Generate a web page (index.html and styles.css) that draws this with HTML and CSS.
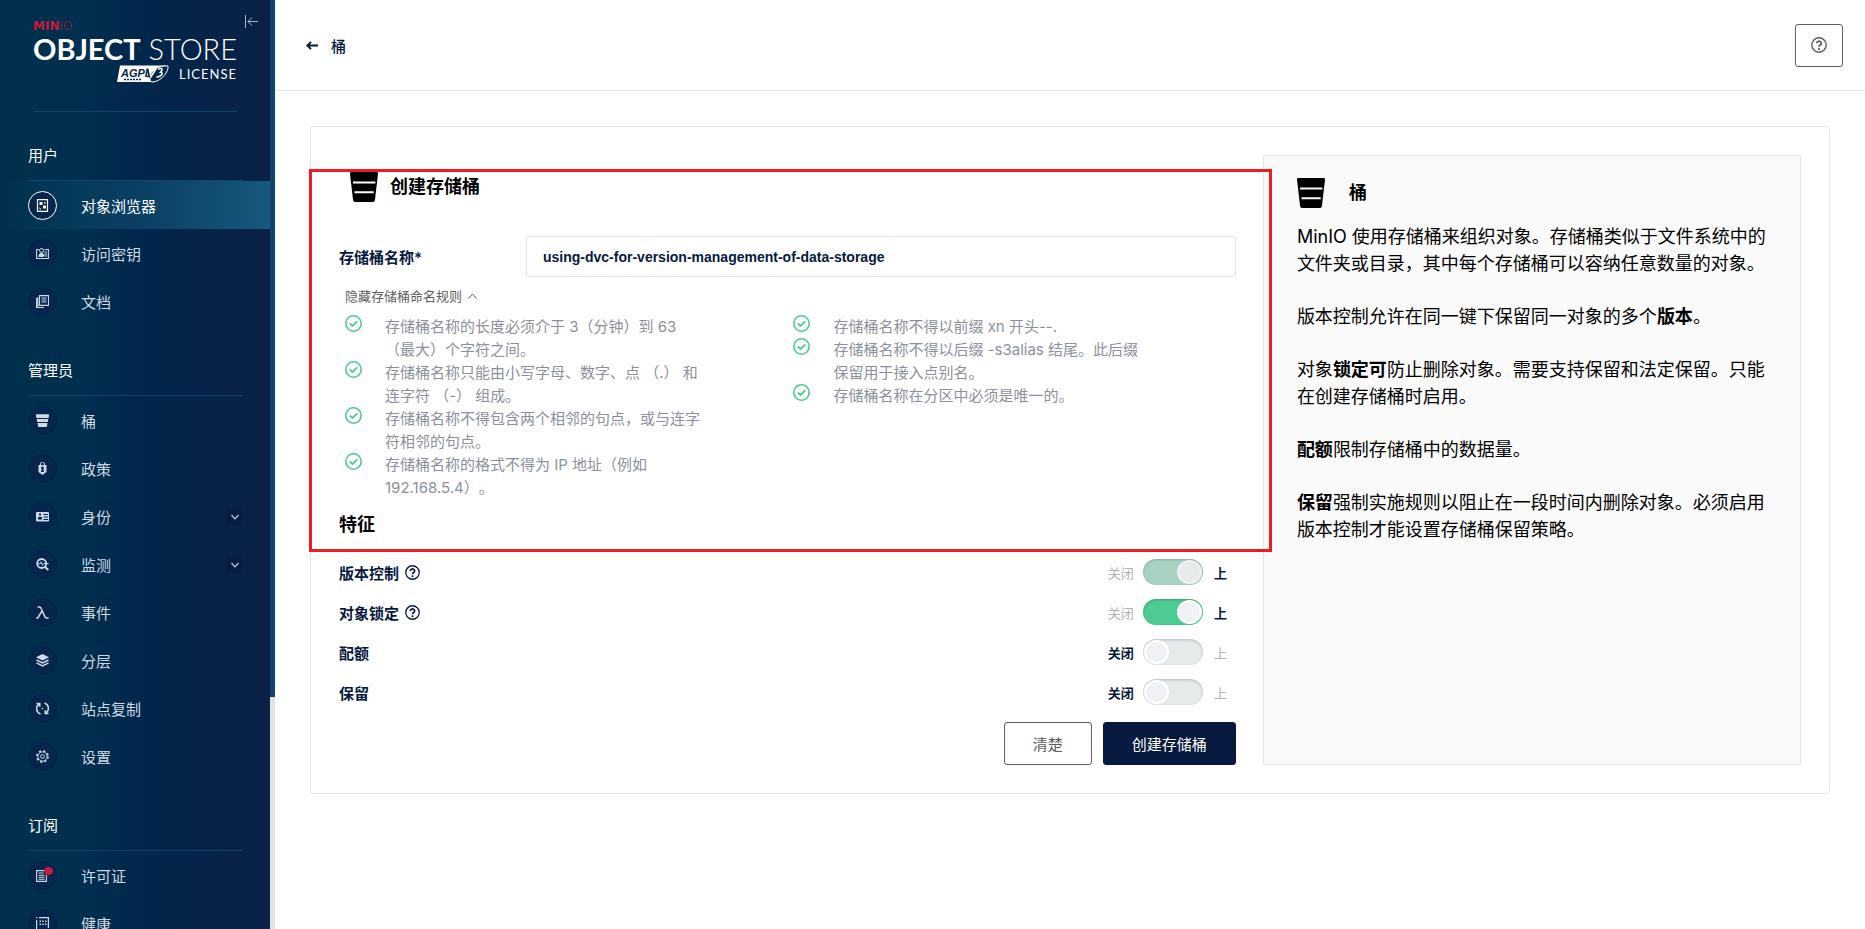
FILE: index.html
```html
<!DOCTYPE html>
<html lang="zh-CN">
<head>
<meta charset="utf-8">
<title>创建存储桶</title>
<link rel="stylesheet" href="styles.css">
</head>
<body>
<svg class="defs" aria-hidden="true">
  <symbol id="i-bucket" viewBox="0 0 28 30"><path fill-rule="evenodd" d="M1.5 0h25A1.500 1.500 0 0 1 28 1.700L24.900 28.200A2 2 0 0 1 23 30H5a2 2 0 0 1-1.900-1.800L0 1.700A1.500 1.500 0 0 1 1.500 0zM3 9.400v2h22.400v-2zM4.500 19.200v2h19.200v-2z"/></symbol>
  <symbol id="i-bucket-small" viewBox="0 0 13 13"><path d="M0 .300h13L12.700 4H.300zM.800 5h11.400L11.900 8H1.100zM1.500 9h10l-.5 3.200a1 1 0 0 1-1 .8H3a1 1 0 0 1-1-.8z"/></symbol>
  <symbol id="i-help" viewBox="0 0 16 16"><circle cx="8" cy="8" r="7.200" fill="none" stroke="currentColor" stroke-width="1.400"/><path d="M5.700 6.300a2.300 2.100 0 1 1 3.500 1.800c-.9.500-1.200.8-1.200 1.700" fill="none" stroke="currentColor" stroke-width="1.800"/><circle cx="8" cy="11.900" r="1.100"/></symbol>
  <symbol id="i-check" viewBox="0 0 17 17"><circle cx="8.500" cy="8.500" r="7.700" fill="none" stroke="currentColor" stroke-width="1.600"/><path d="M4.800 8.500l2.700 2.400L12.200 6.300" fill="none" stroke="currentColor" stroke-width="1.800"/></symbol>
  <symbol id="i-down" viewBox="0 0 8 8"><path d="M.5 2L4 5.800 7.500 2" fill="none" stroke="currentColor" stroke-width="1.200"/></symbol>
</svg>
<div class="app">
  <aside class="sidebar">
    <div class="brand">
      <button class="collapse" aria-label="收起菜单"><svg viewBox="0 0 13 13"><path d="M.5 0v13M13 6.500H3M7 2.500l-4 4 4 4" fill="none" stroke="currentColor"/></svg></button>
      <div class="brand-minio"><b>MIN</b>IO</div>
      <div class="brand-name"><b>OBJECT</b> <span>STORE</span></div>
      <div class="brand-license">
        <svg class="agpl" viewBox="0 0 52 18"><path d="M3 .500h46L38 17H0z" fill="#fff"/><path d="M33 14C32 6 42 0 51 1c1 5-6 15-15 16-2 0-3-1-3-3z" fill="#02264b" stroke="#fff"/><text x="4" y="11.500">AGPL</text><path d="M30.500 3.500l2 9" fill="none" stroke="#02264b" stroke-width="1.600"/><path d="M33.500 12.500L39 4M41 4.500c3-2 6-1 2.500 2.700 3 0 2 4.300-4 5" fill="none" stroke="#fff" stroke-width="1.500"/><path d="M7 14.500h18" stroke="#02264b" stroke-width="1.500" stroke-dasharray="2 1"/></svg>
        <span>LICENSE</span>
      </div>
    </div>
    <nav>
      <section>
        <h2>用户</h2>
        <ul>
          <li><a class="active" href="#"><i><svg viewBox="0 0 13 13"><path d="M1.500.600h10v11.800h-10z" fill="none" stroke="currentColor" stroke-width="1.200"/><path d="M3.500 3h3v3h-3zM7 6.500h3v3H7zM8 3h1.500v1.500H8zM3.500 8l2 2.500h-2z"/></svg></i>对象浏览器</a></li>
          <li><a href="#"><i><svg viewBox="0 0 13 13"><path d="M3 2.500H.600v9h11.800v-9H8.500M8.500 5h2.500M8.500 7h2.500M8.500 9h2.500M2.500 9.500h5" fill="none" stroke="currentColor" stroke-width="1.100"/><circle cx="5.500" cy="3.500" r="2" fill="none" stroke="currentColor"/><path d="M2.500 9c0-4 6-4 6 0z"/></svg></i>访问密钥</a></li>
          <li><a href="#"><i><svg viewBox="0 0 13 13"><path d="M3.500.600h9v9.800h-9zM.600 3v9.500H8M5.500 3h5M5.500 5h5M5.500 7h5M1.800 2v9h1" fill="none" stroke="currentColor" stroke-width="1.100"/></svg></i>文档</a></li>
        </ul>
      </section>
      <section>
        <h2>管理员</h2>
        <ul>
          <li><a href="#"><i><svg><use href="#i-bucket-small"/></svg></i>桶</a></li>
          <li><a href="#"><i><svg viewBox="0 0 13 13"><path fill-rule="evenodd" d="M2.500 3h8v7L6.500 13l-4-3zM6.500 4.500a1.500 1.500 0 0 0-.8 2.700L5 10h3l-.7-2.800a1.500 1.500 0 0 0-.8-2.700z"/><path d="M4.500 3.500V2a2 2 0 0 1 4 0v1.500" fill="none" stroke="currentColor"/></svg></i>政策</a></li>
          <li><a href="#"><i><svg viewBox="0 0 13 13"><path fill-rule="evenodd" d="M1 2h11a1 1 0 0 1 1 1v7.500a1 1 0 0 1-1 1H1a1 1 0 0 1-1-1V3a1 1 0 0 1 1-1zM3 3.500v2h2v-2zM2 7v2.500h4V7zM7.500 4v1H12V4zM7.500 6.500v1H12v-1zM7.500 9v1H12V9z"/></svg></i>身份</a><button class="expand" aria-label="展开身份"><svg><use href="#i-down"/></svg></button></li>
          <li><a href="#"><i><svg viewBox="0 0 13 13"><circle cx="5.700" cy="5.500" r="4.500" fill="none" stroke="currentColor" stroke-width="1.800"/><path d="M2 5.800h2l1-2 1.500 3.500 1-1.700h5" fill="none" stroke="currentColor" stroke-width="1"/><path d="M8.800 8.800l3.500 3.200" stroke="currentColor" stroke-width="2"/></svg></i>监测</a><button class="expand" aria-label="展开监测"><svg><use href="#i-down"/></svg></button></li>
          <li><a href="#"><i><svg viewBox="0 0 13 13"><path d="M1.500 1h2.200c.8 0 1 .5 1.300 1.200l4 8.700c.4.900.9 1.100 1.600 1.100h2M6 4.800L1.800 12H.200" fill="none" stroke="currentColor" stroke-width="1.500"/></svg></i>事件</a></li>
          <li><a href="#"><i><svg viewBox="0 0 13 13"><path d="M6.500 0L13 3.300 6.500 6.600 0 3.300z"/><path d="M.5 6l6 3 6-3M.5 8.800l6 3 6-3" fill="none" stroke="currentColor" stroke-width="1.500"/></svg></i>分层</a></li>
          <li><a href="#"><i><svg viewBox="0 0 13 13"><path d="M4.500 12A5.500 5.500 0 0 1 3 2.200M8.500 1A5.500 5.500 0 0 1 10 10.800M.5 1.500h3.200v3.200M12.500 11.500H9.300V8.300" fill="none" stroke="currentColor" stroke-width="1.600"/><circle cx="6.500" cy="6.500" r=".8"/></svg></i>站点复制</a></li>
          <li><a href="#"><i><svg viewBox="0 0 13 13"><circle cx="6.500" cy="6.500" r="5.600" fill="none" stroke="currentColor" stroke-width="1.600" stroke-dasharray="2.200 2.200"/><circle cx="6.500" cy="6.500" r="4.600" fill="none" stroke="currentColor"/><circle cx="6.500" cy="6.500" r="1.900" fill="none" stroke="currentColor"/></svg></i>设置</a></li>
        </ul>
      </section>
      <section>
        <h2>订阅</h2>
        <ul>
          <li><a href="#"><i><svg viewBox="0 0 13 13"><path d="M8 1.600H.600v10.800h9.800V6M2.500 4h5M2.500 6.200h6M2.500 8.300h6M2.500 10.300h6" fill="none" stroke="currentColor" stroke-width="1.100"/></svg><em class="dot"></em></i>许可证</a></li>
          <li><a href="#"><i><svg viewBox="0 0 13 13"><path d="M3 .600h9.400V11M.600 0v1.200M.600 3v10" fill="none" stroke="currentColor" stroke-width="1.200"/><path d="M3.500 3.500h1.500V5H3.500zM6.200 3.500h1.500V5H6.200zM9 3.500h1.500V5H9zM3.500 6.500h1.500V8H3.500zM6.200 6.500h1.500V8H6.200zM9 6.500h1.500V8H9z"/></svg></i>健康</a></li>
        </ul>
      </section>
    </nav>
  </aside>
  <div class="track"><div class="thumb"></div></div>
  <main>
    <header class="topbar">
      <a class="back" href="#"><svg viewBox="0 0 12 9"><path d="M12 4.500H1.500M5 .800L1.300 4.500 5 8.200" fill="none" stroke="currentColor" stroke-width="1.900"/></svg>桶</a>
      <button class="help" aria-label="帮助"><svg><use href="#i-help"/></svg></button>
    </header>
    <div class="card">
      <form class="form">
        <div class="marked">
          <h1><svg><use href="#i-bucket"/></svg>创建存储桶</h1>
          <div class="field">
            <label for="name">存储桶名称*</label>
            <input id="name" type="text" value="using-dvc-for-version-management-of-data-storage">
          </div>
          <button type="button" class="rules-toggle">隐藏存储桶命名规则<svg viewBox="0 0 9 6"><path d="M.5 5.500l4-4.500 4 4.500" fill="none" stroke="currentColor"/></svg></button>
          <div class="rules">
            <ul>
              <li><svg><use href="#i-check"/></svg><span>存储桶名称的长度必须介于 3（分钟）到 63（最大）个字符之间。</span></li>
              <li><svg><use href="#i-check"/></svg><span>存储桶名称只能由小写字母、数字、点 （.） 和连字符 （-） 组成。</span></li>
              <li><svg><use href="#i-check"/></svg><span>存储桶名称不得包含两个相邻的句点，或与连字符相邻的句点。</span></li>
              <li><svg><use href="#i-check"/></svg><span>存储桶名称的格式不得为 IP 地址（例如 192.168.5.4）。</span></li>
            </ul>
            <ul>
              <li><svg><use href="#i-check"/></svg><span>存储桶名称不得以前缀 xn 开头--.</span></li>
              <li><svg><use href="#i-check"/></svg><span>存储桶名称不得以后缀 -s3alias 结尾。此后缀保留用于接入点别名。</span></li>
              <li><svg><use href="#i-check"/></svg><span>存储桶名称在分区中必须是唯一的。</span></li>
            </ul>
          </div>
          <h3>特征</h3>
        </div>
        <div class="feature"><label for="f1">版本控制<svg><use href="#i-help"/></svg></label><span class="state">关闭</span><input id="f1" type="checkbox" checked disabled><span class="state on">上</span></div>
        <div class="feature"><label for="f2">对象锁定<svg><use href="#i-help"/></svg></label><span class="state">关闭</span><input id="f2" type="checkbox" checked><span class="state on">上</span></div>
        <div class="feature"><label for="f3">配额</label><span class="state on">关闭</span><input id="f3" type="checkbox"><span class="state">上</span></div>
        <div class="feature"><label for="f4">保留</label><span class="state on">关闭</span><input id="f4" type="checkbox"><span class="state">上</span></div>
        <div class="actions">
          <button type="reset" class="clear">清楚</button>
          <button type="submit" class="create">创建存储桶</button>
        </div>
      </form>
      <section class="info">
        <h2><svg><use href="#i-bucket"/></svg>桶</h2>
        <p>MinIO 使用存储桶来组织对象。存储桶类似于文件系统中的文件夹或目录，其中每个存储桶可以容纳任意数量的对象。</p>
        <p>版本控制允许在同一键下保留同一对象的多个<b>版本</b>。</p>
        <p>对象<b>锁定可</b>防止删除对象。需要支持保留和法定保留。只能在创建存储桶时启用。</p>
        <p><b>配额</b>限制存储桶中的数据量。</p>
        <p><b>保留</b>强制实施规则以阻止在一段时间内删除对象。必须启用版本控制才能设置存储桶保留策略。</p>
      </section>
    </div>
  </main>
</div>
</body>
</html>
```
FILE: styles.css
```css
*, *::before, *::after { box-sizing: border-box; }
* { margin: 0; padding: 0; }
body { font-family: Inter, "Noto Sans CJK SC", sans-serif; font-size: 15px; color: #07193e; background: #fff; text-spacing-trim: space-all; }
ul { list-style: none; }
a { color: inherit; text-decoration: none; }
button { font: inherit; cursor: pointer; }
svg { fill: currentColor; flex: none; }
.defs { position: absolute; width: 0; height: 0; }

.app { display: flex; height: 100vh; overflow: hidden; }

.sidebar { width: 270px; flex: none; overflow: hidden; color: #fff; background: linear-gradient(90deg, #00304b 0%, #002f4f 30%, #01264b 55%, #0b2046 100%); }
.track { width: 5px; flex: none; background: #e2e2e2; }
.thumb { height: 75%; background: #0f446c; }

.brand { position: relative; margin: 0 33px; padding-top: 19px; height: 112px; border-bottom: 1px solid #0f446c; }
.collapse { position: absolute; top: 15px; right: -21px; width: 13px; height: 13px; border: 0; background: none; color: #a8b5c5; }
.collapse svg { display: block; width: 13px; height: 13px; }
.brand-minio { font: 200 12px/14px "DejaVu Sans", sans-serif; color: #c8193c; }
.brand-minio b { font-weight: 700; }
.brand-name { font: 300 29px/32px Lato, sans-serif; white-space: nowrap; }
.brand-name b { font-weight: 700; }
.brand-license { display: flex; justify-content: flex-end; align-items: center; gap: 10px; font: 400 13px/16px Lato, sans-serif; letter-spacing: 1px; }
.agpl { width: 52px; height: 18px; }
.agpl text { font: italic 700 11px "Liberation Sans", sans-serif; letter-spacing: 0; fill: #02264b; }

nav { padding-top: 32px; }
nav h2 { margin: 0 27px 0 28px; padding-bottom: 12px; border-bottom: 1px solid #0f446c; font-size: 15px; line-height: 24px; font-weight: 400; }
nav ul { padding-bottom: 2px; margin-bottom: 32px; }
nav li { position: relative; }
nav a { display: flex; align-items: center; gap: 24px; height: 48px; padding-left: 28px; color: #d0dae4; }
nav a.active { color: #fff; background: linear-gradient(90deg, rgba(21, 92, 128, 0) 0%, rgba(21, 92, 128, .45) 50%, #15597c 100%); }
nav i { position: relative; display: flex; align-items: center; justify-content: center; width: 29px; height: 29px; border: 1px solid #07234a; border-radius: 50%; background: #06264d; }
nav .active i { border-color: #fff; }
nav i svg { width: 13px; height: 13px; }
.dot { position: absolute; top: 5px; right: 3px; width: 9px; height: 8px; border-radius: 50%; background: #c8193c; }
.expand { position: absolute; right: 27px; top: 16px; width: 17px; height: 17px; display: flex; align-items: center; justify-content: center; border: 0; border-radius: 2px; background: #081c42; color: #c4cfdb; }
.expand svg { width: 8px; height: 8px; }

main { flex: 1; min-width: 0; }
.topbar { display: flex; align-items: center; justify-content: space-between; height: 91px; padding: 0 22px 0 31px; border-bottom: 1px solid #e5e5e5; }
.back { display: flex; align-items: center; gap: 13px; font-weight: 500; }
.back svg { width: 12px; height: 9px; }
.help { display: flex; align-items: center; justify-content: center; width: 48px; height: 43px; border: 1px solid #5e5e5e; border-radius: 3px; background: #fff; color: #5e5e5e; }
.help svg { width: 16px; height: 16px; }

.card { display: grid; grid-template-columns: 5fr 3fr; gap: 27px; margin: 35px 35px 0; padding: 28px; border: 1px solid #e5e5e5; border-radius: 3px; }
.marked { position: relative; padding-top: 16px; }
.marked::after { content: ""; position: absolute; top: 14px; right: -36px; bottom: -15px; left: -30px; border: 3px solid #ed1c24; pointer-events: none; }
h1 { display: flex; align-items: center; gap: 12px; padding-left: 11px; font-size: 18px; line-height: 32px; color: #000; }
h1 svg, .info h2 svg { width: 28px; height: 30px; }
.field { display: grid; grid-template-columns: 187px 1fr; align-items: center; margin-top: 33px; font-weight: 600; }
.field input { width: 100%; height: 41px; padding: 0 16px; border: 1px solid #e2e2e2; border-radius: 3px; font: 700 14px "Liberation Sans", Arial, sans-serif; color: #07193e; }
.rules-toggle { display: flex; align-items: center; gap: 6px; margin: 9px 0 0 6px; border: 0; background: none; color: #5e5e5e; font-size: 13px; line-height: 20px; }
.rules-toggle svg { width: 9px; height: 6px; }
.rules { display: grid; grid-template-columns: 1fr 1fr; margin-top: 9px; color: #8b909c; line-height: 23px; }
.rules li { display: flex; gap: 23px; padding: 0 84px 0 6px; }
.rules svg { width: 17px; height: 17px; color: #4ccb92; }
h3 { margin-top: 14px; font-size: 18px; line-height: 24px; color: #000; }
.feature { display: flex; align-items: center; height: 40px; }
.marked + .feature { margin-top: 15px; }
.feature label { display: flex; align-items: center; gap: 6px; flex: 1; font-weight: 600; }
.feature label svg { width: 15px; height: 15px; }
.state { font-size: 13px; color: #b0b0b0; }
.state.on { font-weight: 600; color: #07193e; }
.feature input { appearance: none; width: 60px; height: 26px; margin: 0 11px 0 9px; padding: 1px; display: flex; border-radius: 13px; background: #e6eaeb; box-shadow: inset 0 1px 3px rgba(0, 0, 0, .2); }
.feature input::before { content: ""; width: 25px; height: 24px; border: 2px solid #fff; border-radius: 50%; background: #f0f3f5; }
.feature input:checked { justify-content: flex-end; background: #4ccb92; }
.feature input:disabled { background: #a8d3c3; }
.feature input:disabled::before { background: #e6eaeb; border-color: #eef2f2; }
.feature .state:last-child { width: 22px; }
.actions { display: flex; justify-content: flex-end; gap: 11px; margin-top: 10px; }
.actions button { height: 43px; padding: 0 28px; border-radius: 3px; border: 1px solid #5e5e5e; background: #fff; color: #5e5e5e; }
.actions .create { border-color: #07193e; background: #07193e; color: #fff; }

.info { padding: 22px 28px 22px 33px; border: 1px solid #e5e5e5; border-radius: 2px; background: #fafafa; color: #000; font-size: 18px; line-height: 27px; }
.info h2 { display: flex; align-items: center; gap: 24px; margin-bottom: 15px; font-size: 18px; line-height: 30px; }
.info p + p { margin-top: 26px; }
```
